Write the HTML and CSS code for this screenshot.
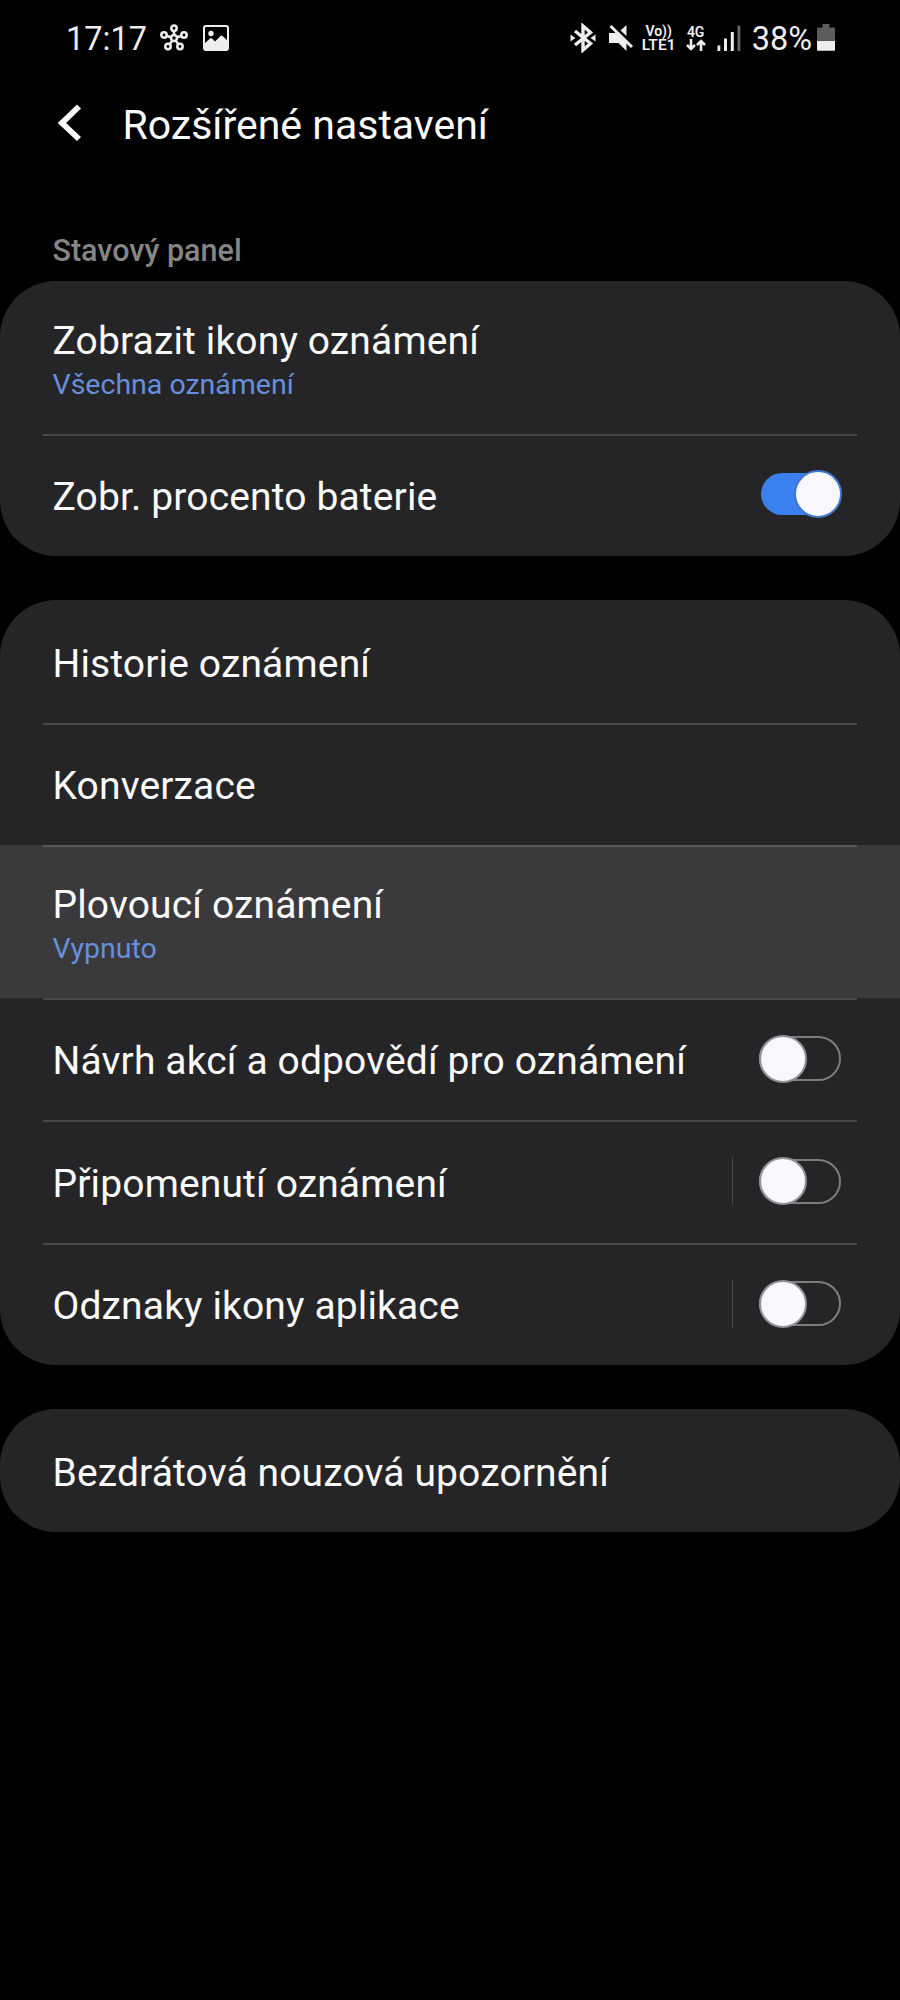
FILE: index.html
```html
<!DOCTYPE html>
<html lang="cs">
<head>
    <meta charset="UTF-8">
    <meta name="viewport" content="width=device-width, initial-scale=1.0">
    <title>Rozšířené nastavení</title>
    <link rel="stylesheet" href="styles.css">
</head>
<body>

    <div class="status-bar">
        <div class="status-left">
            <span class="clock">17:17</span>
            <svg class="icon-hub" width="28" height="28" viewBox="0 0 28 28">
                <g fill="none" stroke="#eee" stroke-width="2.500">
                    <path d="M14 11V7M11 13.200L6.500 11.800M17 13.200L21.500 11.800M12.200 16.800L9.500 20.500M15.800 16.800L18.500 20.500"/>
                    <circle cx="14" cy="14" r="3"/>
                    <circle cx="14" cy="4.300" r="2.700"/>
                    <circle cx="4" cy="11" r="2.700"/>
                    <circle cx="24" cy="11" r="2.700"/>
                    <circle cx="8" cy="22.500" r="2.700"/>
                    <circle cx="20" cy="22.500" r="2.700"/>
                </g>
            </svg>
            <svg class="icon-image" width="26" height="26" viewBox="0 0 26 26">
                <rect x="1" y="1" width="24" height="24" rx="2" fill="none" stroke="#eee" stroke-width="2"/>
                <circle cx="8" cy="8.500" r="2.700" fill="#eee"/>
                <path d="M1 19L7 13.500Q8 12.500 9 13.500L12 16.500L17.500 11Q18.500 10 19.500 11L25 16V25H1Z" fill="#eee"/>
            </svg>
        </div>
        <div class="status-right">
            <svg class="icon-bluetooth" width="26" height="30" viewBox="0 0 26 30">
                <path d="M5 8L20.500 20.500L13 27V3L20.500 9.500L5 22" fill="none" stroke="#eee" stroke-width="3.400"/>
                <path d="M0.500 11.500L5.500 15L0.500 18.500ZM25.500 11.500L20.500 15L25.500 18.500Z" fill="#eee"/>
            </svg>
            <svg class="icon-mute" width="24" height="28" viewBox="0 0 24 28">
                <path d="M0 9H7L17.500 18.500V27L9.500 19H0ZM17.500 1V12L11.500 6.500Z" fill="#eee"/>
                <path d="M1.500 2L23 23" stroke="#eee" stroke-width="3"/>
            </svg>
            <div class="volte">
                <span>Vo))</span>
                <span class="lte">LTE1</span>
            </div>
            <div class="network">
                <span>4G</span>
                <svg width="20" height="12" viewBox="0 0 20 12">
                    <path d="M5 0V10M1 6L5 10L9 6M15 12V2M11 6L15 2L19 6" fill="none" stroke="#eee" stroke-width="2.600"/>
                </svg>
            </div>
            <svg class="icon-signal" width="24" height="26" viewBox="0 0 24 26">
                <path d="M0.500 20.500H3.300V26H0.500ZM7 13.500H10V26H7ZM13.800 7H16.800V26H13.800Z" fill="#eee"/>
                <rect x="20.500" y="0.500" width="2.800" height="25.500" fill="#666"/>
            </svg>
            <span class="percent">38%</span>
            <svg class="icon-battery" width="18" height="27" viewBox="0 0 18 27">
                <path d="M5.500 0H12.500V3.500H17Q18 3.500 18 4.500V17H0V4.500Q0 3.500 1 3.500H5.500Z" fill="#5c5c5c"/>
                <path d="M0 17H18V25.500Q18 26.700 17 26.700H1Q0 26.700 0 25.500Z" fill="#eee"/>
            </svg>
        </div>
    </div>

    <div class="header">
        <svg class="back" width="24" height="38" viewBox="0 0 24 38">
            <path d="M21 2.500L4 19L21 35" fill="none" stroke="#fafafa" stroke-width="5.800"/>
        </svg>
        <h1>Rozšířené nastavení</h1>
    </div>

    <h2>Stavový panel</h2>

    <div class="card">
        <div class="row tall">
            <div class="row-body">
                <div class="text">
                    <div class="title">Zobrazit ikony oznámení</div>
                    <div class="sub">Všechna oznámení</div>
                </div>
            </div>
        </div>
        <div class="row">
            <div class="row-body">
                <div class="title">Zobr. procento baterie</div>
                <div class="switch on"><div class="knob"></div></div>
            </div>
        </div>
    </div>

    <div class="card">
        <div class="row">
            <div class="row-body">
                <div class="title">Historie oznámení</div>
            </div>
        </div>
        <div class="row">
            <div class="row-body">
                <div class="title">Konverzace</div>
            </div>
        </div>
        <div class="row tall pressed">
            <div class="row-body">
                <div class="text">
                    <div class="title">Plovoucí oznámení</div>
                    <div class="sub">Vypnuto</div>
                </div>
            </div>
        </div>
        <div class="row">
            <div class="row-body">
                <div class="title">Návrh akcí a odpovědí pro oznámení</div>
                <div class="switch"><div class="knob"></div></div>
            </div>
        </div>
        <div class="row">
            <div class="row-body">
                <div class="title">Připomenutí oznámení</div>
                <div class="separator"></div>
                <div class="switch"><div class="knob"></div></div>
            </div>
        </div>
        <div class="row">
            <div class="row-body">
                <div class="title">Odznaky ikony aplikace</div>
                <div class="separator"></div>
                <div class="switch"><div class="knob"></div></div>
            </div>
        </div>
    </div>

    <div class="card">
        <div class="row">
            <div class="row-body">
                <div class="title">Bezdrátová nouzová upozornění</div>
            </div>
        </div>
    </div>

</body>
</html>
```
FILE: styles.css
```css
* {
    box-sizing: border-box;
}

body {
    margin: 0;
    min-height: 2000px;
    background-color: #000;
    color: #fafafa;
    font-family: Roboto, sans-serif;
}

.status-bar {
    display: flex;
    justify-content: space-between;
    height: 76px;
    padding: 0 65px 0 66px;
    color: #eee;
}

.status-left,
.status-right {
    display: flex;
    align-items: center;
}

.clock,
.percent {
    font-size: 32.5px;
    line-height: 38px;
    margin-top: 1px;
}

.icon-hub {
    margin-left: 13px;
}

.icon-image {
    margin-left: 15px;
}

.icon-mute {
    margin-left: 13px;
}

.volte,
.network {
    display: flex;
    flex-direction: column;
    align-items: center;
    font-size: 14px;
    font-weight: 600;
    line-height: 14px;
}

.volte {
    width: 34px;
    margin-left: 9px;
}

.lte {
    font-size: 15.5px;
    line-height: 15px;
}

.network {
    width: 22px;
    margin-left: 9px;
}

.icon-signal {
    margin-left: 10px;
}

.percent {
    margin-left: 11px;
}

.icon-battery {
    margin-left: 5px;
    margin-top: -2px;
}

.header {
    display: flex;
    align-items: center;
    height: 98px;
    padding-left: 58px;
}

.back {
    margin-top: -4px;
}

h1 {
    margin: 0 0 0 40.5px;
    font-size: 41px;
    font-weight: 400;
    line-height: 48px;
}

h2 {
    height: 107px;
    margin: 0;
    padding: 60px 0 0 52.5px;
    font-size: 30.5px;
    font-weight: 500;
    line-height: 34px;
    color: #858585;
}

.card {
    margin-bottom: 44px;
    border-radius: 56px;
    background-color: #252527;
    overflow: hidden;
}

.row {
    height: 122.5px;
    padding: 0 43px;
}

.row-body {
    display: flex;
    align-items: center;
    height: 100%;
    padding: 0 16px 0 9.5px;
    border-top: 2px solid #48484a;
}

.row:first-child .row-body {
    border-top-color: transparent;
}

.tall {
    height: 152.5px;
}

.pressed {
    background-color: #3a393b;
}

.pressed .row-body {
    border-top-color: #58575a;
}

.title {
    flex: 1;
    padding-top: 3px;
    font-size: 39px;
    line-height: 46px;
    letter-spacing: 0.14px;
    white-space: nowrap;
}

.sub {
    margin-top: 4px;
    font-size: 28.5px;
    line-height: 34px;
    color: #6690dd;
}

.separator {
    width: 1px;
    height: 48px;
    margin: -2px 26px 0 0;
    background-color: #48484a;
}

.switch {
    position: relative;
    width: 82px;
    height: 45px;
    margin-top: -2px;
    border: 2px solid #7d7c7e;
    border-radius: 23px;
}

/* knob is taller than the track */
.knob {
    position: absolute;
    top: -3.5px;
    left: -2px;
    width: 48px;
    height: 48px;
    border: 2px solid #929194;
    border-radius: 50%;
    background-color: #faf8fc;
}

.on {
    width: 80px;
    height: 42px;
    margin-top: -4px;
    border: none;
    background-color: #3a80ee;
}

.on .knob {
    top: -3px;
    left: 32.5px;
    border-color: #3f78cf;
}
```
